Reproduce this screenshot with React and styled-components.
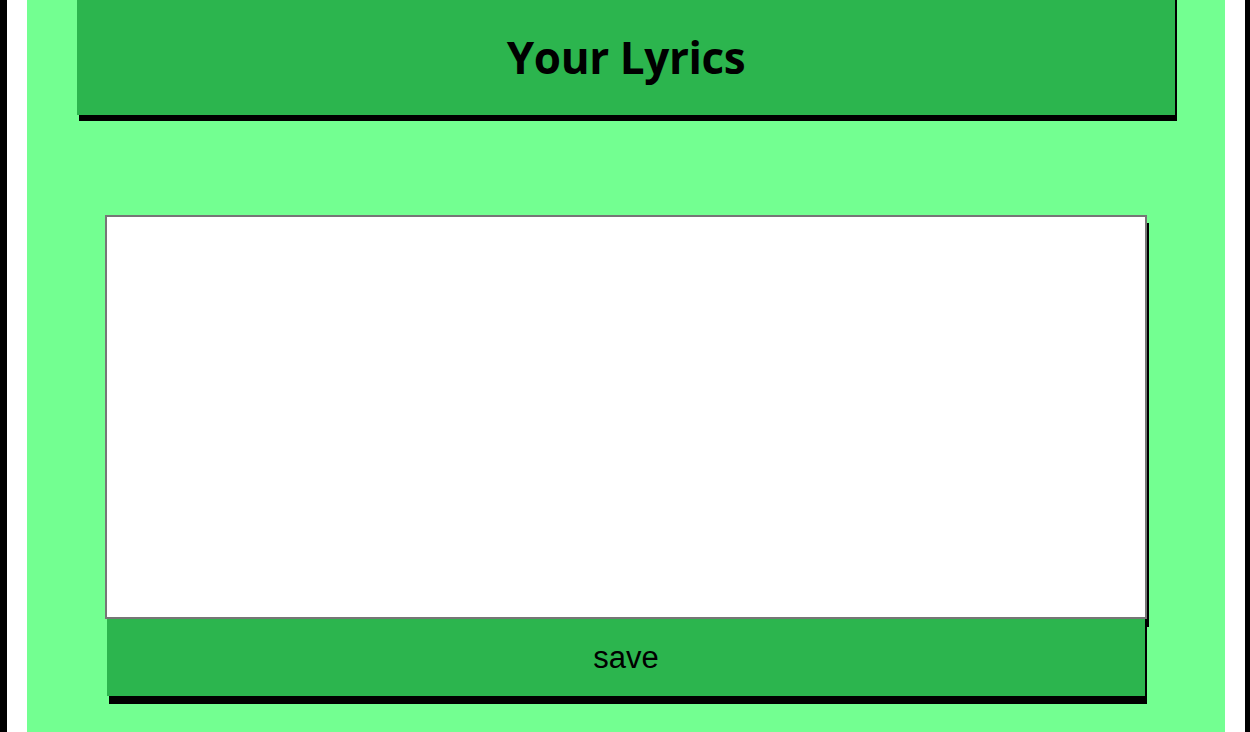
import React, { useState } from "react";
import styled, { createGlobalStyle } from "styled-components";

const GlobalStyle = createGlobalStyle`
  html, body {
    margin: 0;
    padding: 0;
    background: #000;
    height: 100%;
  }
  #root {
    height: 100%;
  }
`;

const PageFrame = styled.div`
  height: 100%;
  margin: 0 5px 0 7px;
  padding: 0 20px;
  background: #fff;
  box-sizing: border-box;
`;

const LyricsPage = styled.main`
  height: 100%;
  background: #73ff91;
  overflow: hidden;
  display: flex;
  flex-direction: column;
`;

const Header = styled.header`
  margin: -10px 50px 0;
  padding-top: 10px;
  height: 115px;
  display: flex;
  align-items: center;
  justify-content: center;
  background: #2cb54e;
  box-shadow: 2px 6px 0 #000;
  h1 {
    margin: 0;
    padding-bottom: 2px;
    font-family: "Open Sans", "Noto Sans", sans-serif;
    font-weight: 700;
    font-size: 44px;
    letter-spacing: -0.4px;
    color: #000;
  }
`;

const LyricsForm = styled.form`
  margin-top: 100px;
  padding: 0 78px;
  display: flex;
  flex-direction: column;
`;

const LyricsInput = styled.textarea`
  display: block;
  box-sizing: border-box;
  width: 100%;
  height: 404px;
  margin: 0;
  border: 2px solid #767676;
  background: #fff;
  resize: none;
  outline: none;
  box-shadow: 2px 8px 0 #000;
  font-family: "Liberation Sans", Arial, sans-serif;
  font-size: 16px;
`;

const SaveButton = styled.button`
  display: block;
  box-sizing: border-box;
  width: calc(100% - 4px);
  height: 77px;
  margin: 0 2px;
  border: none;
  background: #2cb54e;
  box-shadow: 2px 8px 0 #000;
  color: #000;
  font-family: "Liberation Sans", Arial, sans-serif;
  font-size: 31px;
  cursor: pointer;
  position: relative;
`;

const App = () => {
  const [lyrics, setLyrics] = useState("");
  return (
    <>
      <GlobalStyle />
      <PageFrame>
        <LyricsPage>
          <Header>
            <h1>Your Lyrics</h1>
          </Header>
          <LyricsForm onSubmit={(e) => e.preventDefault()}>
            <LyricsInput
              value={lyrics}
              onChange={(e) => setLyrics(e.target.value)}
            />
            <SaveButton type="submit">save</SaveButton>
          </LyricsForm>
        </LyricsPage>
      </PageFrame>
    </>
  );
};

export default App;
